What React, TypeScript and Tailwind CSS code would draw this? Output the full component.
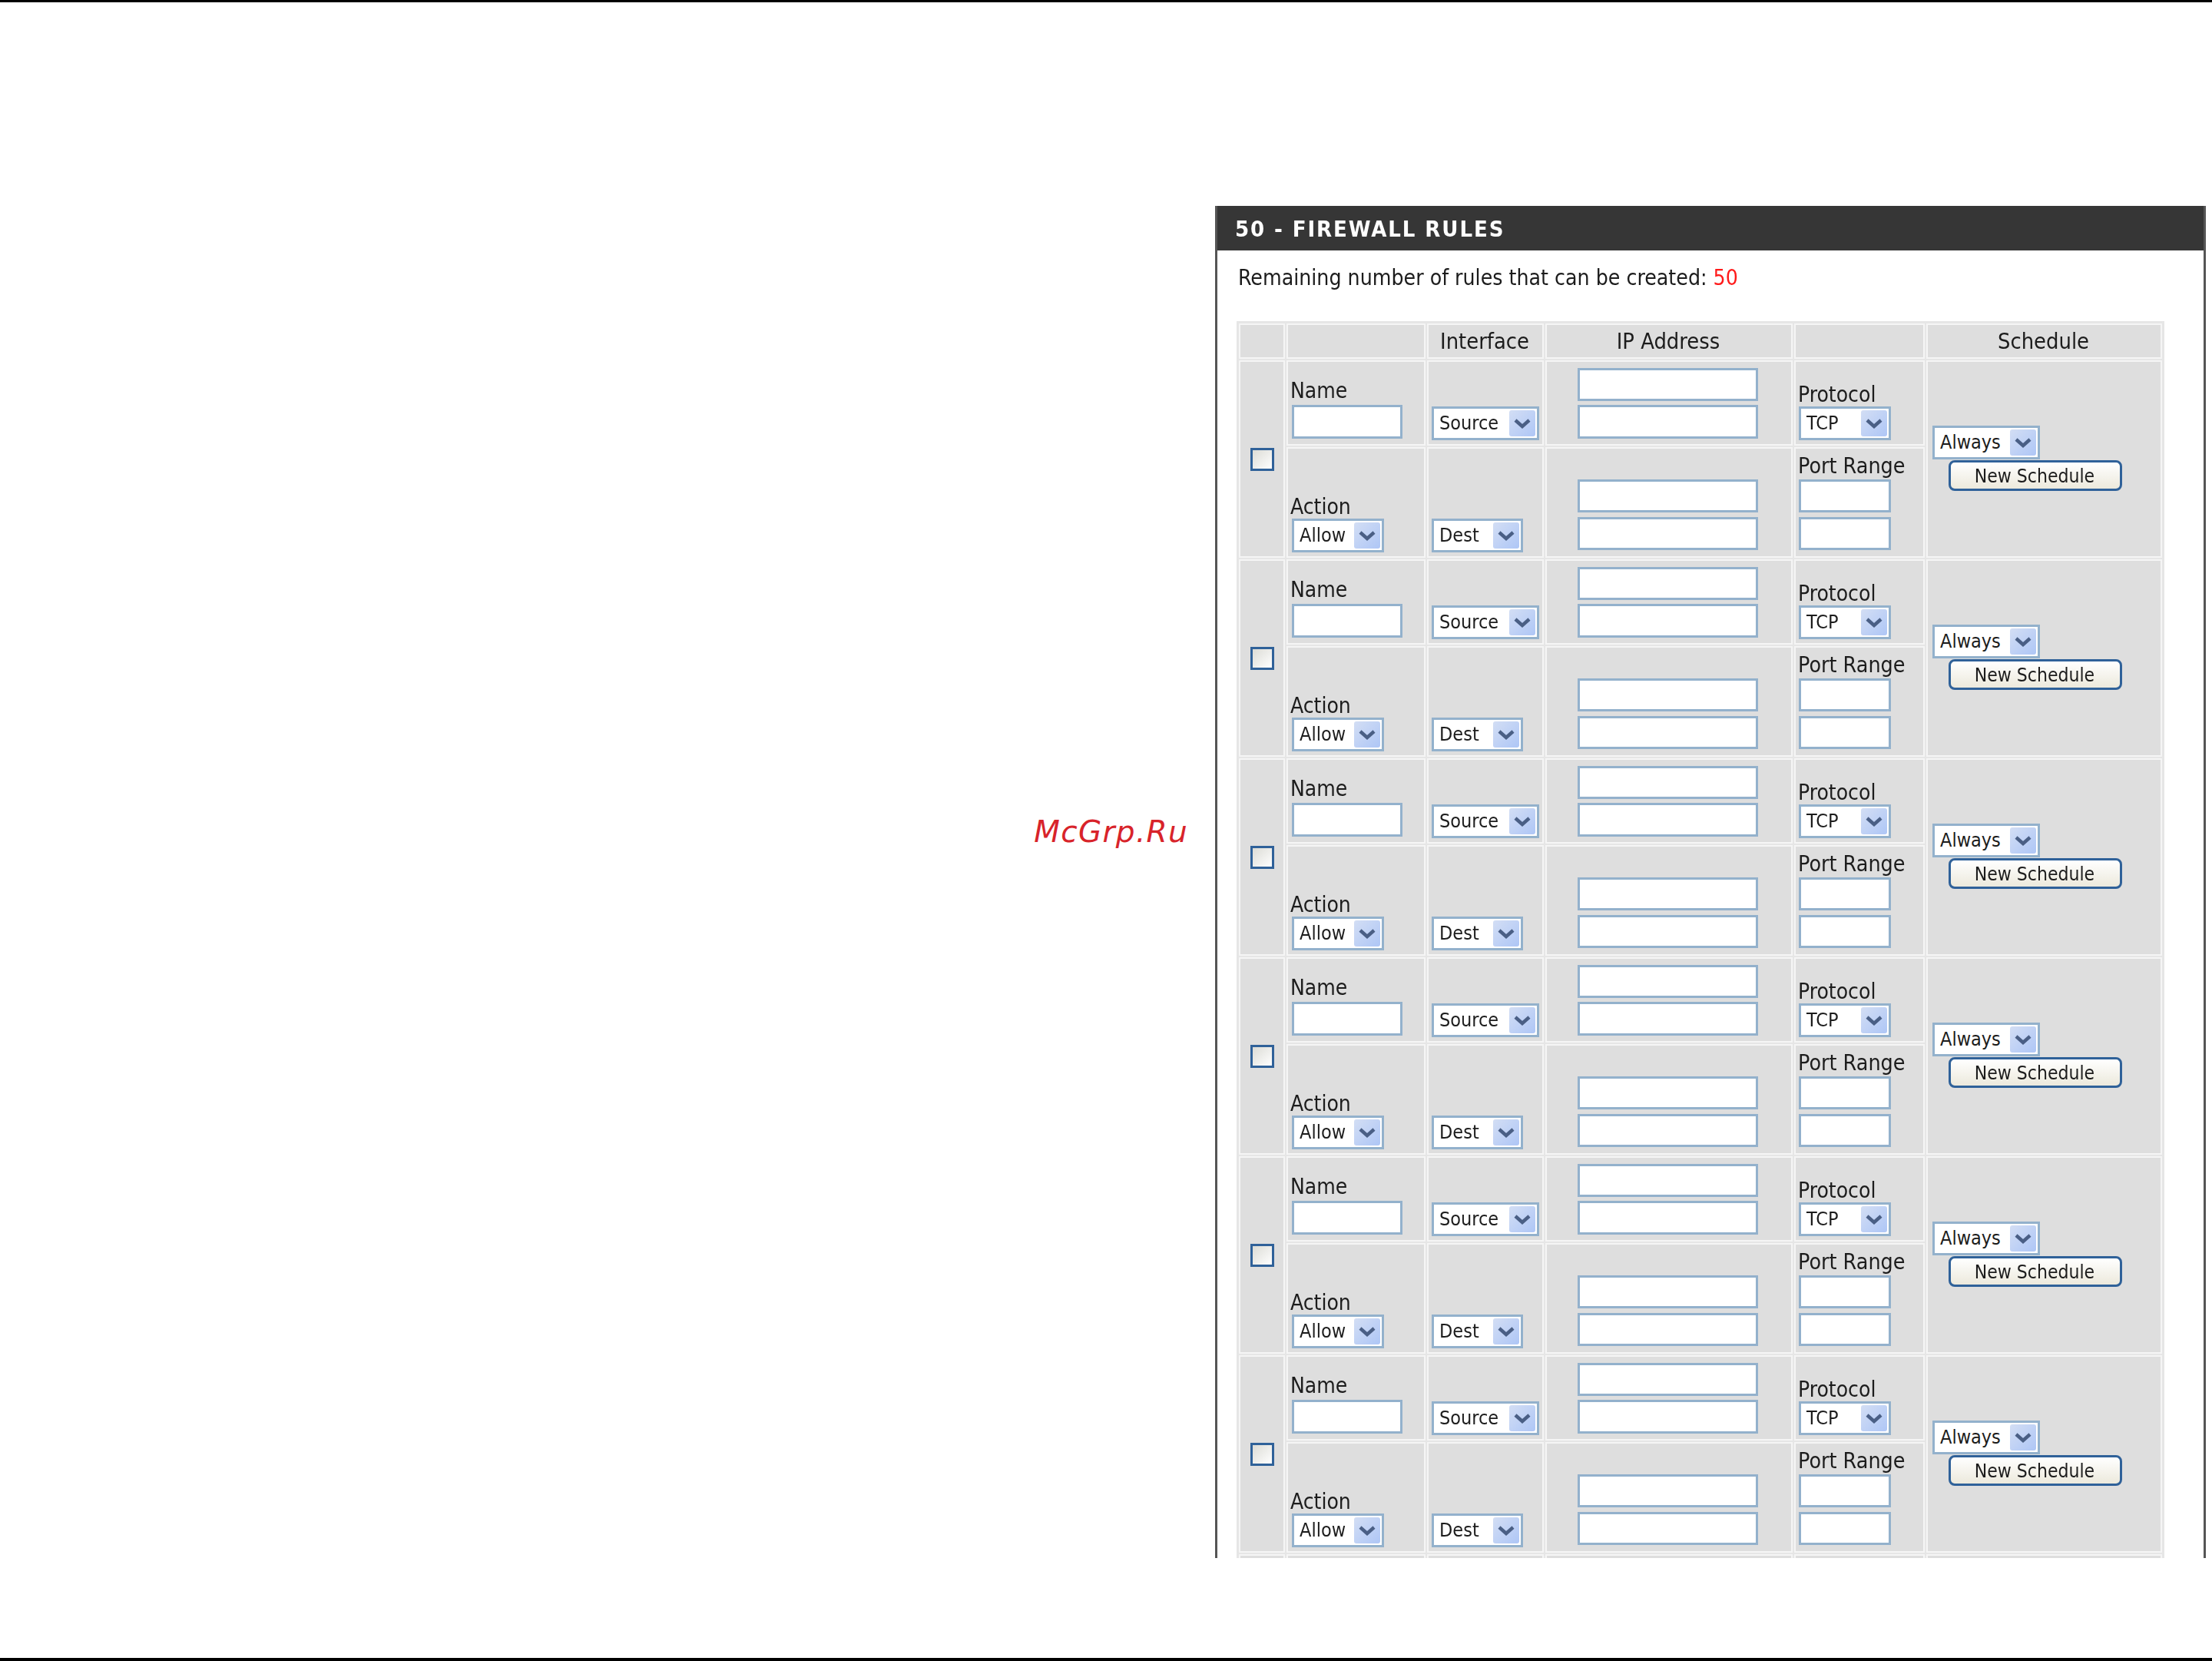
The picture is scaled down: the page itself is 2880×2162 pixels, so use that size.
import React from "react";

const RULES = [0, 1, 2, 3, 4, 5];

function Chevron() {
  return (
    <svg viewBox="0 0 22 14" className="h-[14px] w-[22px]">
      <polyline points="2,3 11,11 20,3" fill="none" stroke="#4a5f85" strokeWidth="4.5" />
    </svg>
  );
}

function Select({ label, width }: { label: string; width: string }) {
  return (
    <div className={`flex h-[44px] items-center justify-between border-[3px] border-[#93b1cc] bg-white pl-[7px] pr-[2px] text-[25px] ${width}`}>
      <span>{label}</span>
      <span className="flex h-[34px] w-[34px] items-center justify-center rounded-[3px] bg-gradient-to-br from-[#d3def4] to-[#aec6f6]">
        <Chevron />
      </span>
    </div>
  );
}

function TextBox({ width, height = "h-[44px]" }: { width: string; height?: string }) {
  return <input type="text" className={`block border-[3px] border-[#93b1cc] bg-white outline-none ${width} ${height}`} />;
}

const cell = "border-2 border-[#f5f5f5] bg-[#dedede] p-0";

function RuleRows() {
  return (
    <>
      <tr className="h-[111px]">
        <td rowSpan={2} className={`${cell} align-middle`}>
          <div className="mx-auto h-[30px] w-[31px] border-[3px] border-[#2f6199] bg-gradient-to-br from-[#dcdcd6] to-white" />
        </td>
        <td className={`${cell} align-bottom`}>
          <div className="pb-[7px] pl-[5px]">
            <div className="-ml-[2px] mb-[3px] leading-[30px]">Name</div>
            <TextBox width="w-[144px]" />
          </div>
        </td>
        <td className={`${cell} align-bottom`}>
          <div className="pb-[5px] pl-[4px]">
            <Select label="Source" width="w-[140px]" />
          </div>
        </td>
        <td className={`${cell} align-bottom`}>
          <div className="flex flex-col gap-[5px] pb-[7px] pl-[40px]">
            <TextBox width="w-[235px]" height="h-[43px]" />
            <TextBox width="w-[235px]" />
          </div>
        </td>
        <td className={`${cell} align-bottom`}>
          <div className="pb-[5px] pl-[4px]">
            <div className="-ml-[1px] leading-[30px]">Protocol</div>
            <Select label="TCP" width="w-[120px]" />
          </div>
        </td>
        <td rowSpan={2} className={`${cell} align-middle`}>
          <div className="flex flex-col items-start gap-[1px] pb-[2px] pl-[6px]">
            <Select label="Always" width="w-[140px]" />
            <button className="ml-[21px] h-[40px] w-[226px] rounded-[8px] border-[3px] border-[#2f6199] bg-gradient-to-b from-white to-[#ece9dc] pr-[2px] text-[24.5px]">
              New Schedule
            </button>
          </div>
        </td>
      </tr>
      <tr className="h-[144px]">
        <td className={`${cell} align-bottom`}>
          <div className="pb-[5px] pl-[5px]">
            <div className="-ml-[2px] leading-[30px]">Action</div>
            <Select label="Allow" width="w-[120px]" />
          </div>
        </td>
        <td className={`${cell} align-bottom`}>
          <div className="pb-[5px] pl-[4px]">
            <Select label="Dest" width="w-[119px]" />
          </div>
        </td>
        <td className={`${cell} align-bottom`}>
          <div className="flex flex-col gap-[6px] pb-[8px] pl-[40px]">
            <TextBox width="w-[235px]" height="h-[43px]" />
            <TextBox width="w-[235px]" height="h-[43px]" />
          </div>
        </td>
        <td className={`${cell} align-bottom`}>
          <div className="pb-[8px] pl-[4px]">
            <div className="-ml-[1px] mb-[2px] text-[28.4px] leading-[30px]">Port Range</div>
            <div className="flex flex-col gap-[6px]">
              <TextBox width="w-[120px]" height="h-[43px]" />
              <TextBox width="w-[120px]" height="h-[43px]" />
            </div>
          </div>
        </td>
      </tr>
    </>
  );
}

export default function App() {
  return (
    <div className="flex h-[2162px] w-[2880px] flex-col bg-white font-['DejaVu_Sans',sans-serif] font-stretch-condensed text-[28px] text-[#1c1c1c]">
      <div className="h-[3px] bg-black" />
      <div className="flex flex-1 items-start">
        <div className="w-[1582px] pr-[35px] pt-[1057px] text-right text-[39px] italic font-stretch-normal leading-[46px] tracking-[1.3px] text-[#d8232a]">
          McGrp.Ru
        </div>
        <section className="mt-[265px] h-[1760px] w-[1290px] overflow-hidden border-x-[3px] border-[#555555] blur-[0.7px]">
          <h2 className="flex h-[58px] items-center bg-[#363636] pl-[23px] pt-[3px] text-[29px] font-bold tracking-[1.9px] text-white">
            50 - FIREWALL RULES
          </h2>
          <p className="pl-[27px] pt-[20px] text-[28.2px] leading-[32px]">
            Remaining number of rules that can be created: <span className="text-[#ff1a1a]">50</span>
          </p>
          <table className="ml-[25px] mt-[40px] w-[1208px] table-fixed border-separate border-spacing-[2px] border border-[#e6e6e6] bg-[#e6e6e6]">
            <colgroup>
              <col className="w-[60px]" />
              <col className="w-[181px]" />
              <col className="w-[152px]" />
              <col className="w-[322px]" />
              <col className="w-[170px]" />
              <col className="w-[307px]" />
            </colgroup>
            <thead>
              <tr className="h-[46px] text-center text-[28.8px] leading-[34px]">
                <th className={`${cell} font-normal`} />
                <th className={`${cell} font-normal`} />
                <th className={`${cell} pr-[2px] font-normal`}>Interface</th>
                <th className={`${cell} pr-[2px] font-normal`}>IP Address</th>
                <th className={`${cell} font-normal`} />
                <th className={`${cell} pr-[2px] font-normal`}>Schedule</th>
              </tr>
            </thead>
            <tbody>
              {RULES.map((r) => (
                <RuleRows key={r} />
              ))}
              {/* next rule is cut off by the page break, only its top edge shows */}
              <tr className="h-[40px]">
                <td className={cell} />
                <td className={cell} />
                <td className={cell} />
                <td className={cell} />
                <td className={cell} />
                <td className={cell} />
              </tr>
            </tbody>
          </table>
        </section>
      </div>
      <div className="h-[4px] bg-black" />
    </div>
  );
}
